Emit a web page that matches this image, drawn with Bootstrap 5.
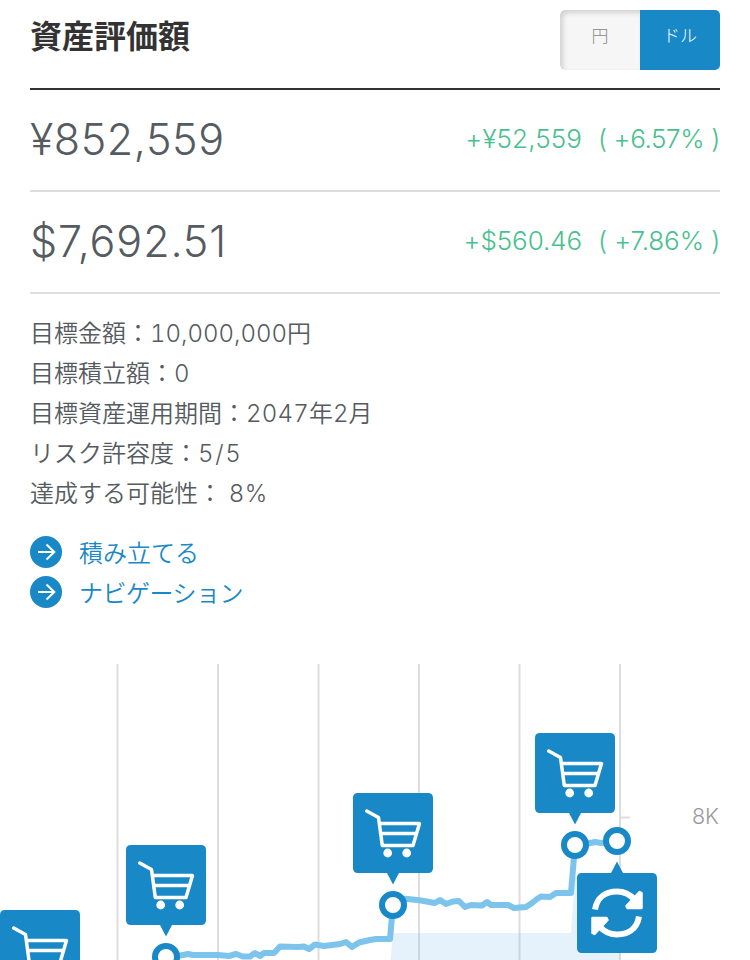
<!DOCTYPE html>
<html lang="ja">
<head>
<meta charset="utf-8">
<meta name="viewport" content="width=device-width, initial-scale=1">
<title>資産評価額</title>
<link href="https://cdn.jsdelivr.net/npm/bootstrap@5.3.0/dist/css/bootstrap.min.css" rel="stylesheet">
<style>
  body { font-family: Inter, "Noto Sans CJK JP", sans-serif; font-weight: 300; color: #555b60; height: 960px; overflow: hidden; }
  .page { height: 960px; overflow: hidden; }
  .pane { padding: 0 30px; }
  .head { height: 90px; padding-top: 10px; border-bottom: 2px solid #333; }
  .head h1 { font-size: 32px; line-height: 54px; font-weight: 700; color: #333; }
  .currency { width: 160px; height: 60px; border-radius: 5px; overflow: hidden; }
  .currency .btn { width: 80px; border: 0; border-radius: 0; padding: 0 0 7px; font-size: 17px; font-weight: 300; line-height: 53px; }
  .currency .off { background: #f6f6f6; color: #888; border-radius: 5px 0 0 5px; box-shadow: inset 3px 3px 5px rgba(0,0,0,.15); }
  .currency .on { background: #1888c6; color: #fff; }
  .sum { height: 102px; border-bottom: 2px solid #ddd; padding-bottom: 2px; }
  .total { font-size: 43px; line-height: 60px; letter-spacing: .6px; }
  .total.usd { letter-spacing: .9px; }
  .gain { font-size: 26px; color: #48c08e; white-space: pre; padding-bottom: 1px; }
  .gain .rate { display: inline-block; width: 122px; margin-left: 16px; }
  .yen { letter-spacing: .1px; }
  .yen .rate { letter-spacing: -.4px; }
  .usd { letter-spacing: -.1px; }
  .facts { padding-top: 20px; font-size: 24px; line-height: 40px; font-weight: 350; }
  .num { font-variant-numeric: tabular-nums; font-weight: 300; }
  .year { letter-spacing: .2px; }
  .risk { letter-spacing: 1.7px; }
  .pct { letter-spacing: .5px; }
  .go { font-size: 24px; line-height: 40px; color: #1888c6; gap: 17px; font-weight: 350; }
  .go:hover { color: #1888c6; }
  .go span { padding-top: 3px; line-height: 37px; }
  .kana { letter-spacing: -.5px; }
  .links { padding-top: 18px; }
  .chart { margin-top: 52px; }
</style>
<script src="https://cdn.jsdelivr.net/npm/bootstrap@5.3.0/dist/js/bootstrap.bundle.min.js"></script>
</head>
<body class="bg-white">
<main class="page">
  <section class="pane">
    <header class="head d-flex justify-content-between align-items-start">
      <h1 class="m-0">資産評価額</h1>
      <div class="currency d-flex">
        <button type="button" class="btn off">円</button>
        <button type="button" class="btn on">ドル</button>
      </div>
    </header>
    <div class="sum d-flex justify-content-between align-items-center">
      <span class="total">¥852,559</span><span class="gain yen">+¥52,559<span class="rate">( +6.57% )</span></span>
    </div>
    <div class="sum d-flex justify-content-between align-items-center">
      <span class="total usd">$7,692.51</span><span class="gain usd">+$560.46<span class="rate">( +7.86% )</span></span>
    </div>
    <ul class="facts list-unstyled m-0">
      <li>目標金額：<span class="num">10,000,000</span>円</li>
      <li>目標積立額：<span class="num">0</span></li>
      <li>目標資産運用期間：<span class="num year">2047</span>年<span class="num">2</span>月</li>
      <li>リスク許容度：<span class="num risk">5/5</span></li>
      <li>達成する可能性： <span class="num pct">8%</span></li>
    </ul>
    <nav class="links d-flex flex-column align-items-start">
      <a href="#" class="go d-flex align-items-center text-decoration-none"><svg width="32" height="32"><use href="#arrow"/></svg><span>積み立てる</span></a>
      <a href="#" class="go d-flex align-items-center text-decoration-none"><svg width="32" height="32"><use href="#arrow"/></svg><span class="kana">ナビゲーション</span></a>
    </nav>
  </section>

  <svg class="chart d-block" width="750" height="296" viewBox="0 664 750 296">
    <defs>
      <symbol id="arrow" viewBox="0 0 32 32">
        <circle cx="16" cy="16" r="16" fill="#1888c6"/>
        <path d="M8 16H24M16.500 8.500L24.300 16L16.500 23.500" fill="none" stroke="#fff" stroke-width="2"/>
      </symbol>
      <g id="cart">
        <path d="M5 0H75Q80 0 80 5V75Q80 80 75 80H46L40 91.500L34 80H5Q0 80 0 75V5Q0 0 5 0Z" fill="#1888c6"/>
        <g fill="none" stroke="#fff" stroke-width="3.500" stroke-linejoin="round" stroke-linecap="round">
          <path d="M13.700 18L25.500 24.500L29.300 52.600H60L66.500 30.600H27"/>
          <path d="M28 40.600H63"/>
        </g>
        <circle cx="34.700" cy="60" r="4.400" fill="#fff"/><circle cx="53.700" cy="60" r="4.400" fill="#fff"/>
      </g>
      <circle id="dot" r="11" fill="#fff" stroke="#1888c6" stroke-width="6"/>
    </defs>
    <path d="M117.500 664V960M218 664V960M318.500 664V960M419 664V960M519.500 664V960M620 664V960M620 817.500H630" stroke="#ddd" stroke-width="2" fill="none"/>
    <path d="M390.500 960L393 933H571L575 877H620V960Z" fill="#7cc0ea" fill-opacity=".2"/>
    <path d="M166 957L180 955.500L188 954L193 955L218 955L229 956L236 954L243 956.500L250 956.500L255 953L260 956L264 953L274 953L280 946.500L298 947L304 946.500L309 949L315 944.500L324 946L340 944L346 942L352 947L359 942.500L370 940L376 939L390 939L393 905L393 898L408 899L421 900.500L435 903L440 900L446 904L453 901.500L459 901L465 907L471 905L482 905.500L487 902L491 905L508 905L514 908L526 907L532 903L537 899L541 896.500L550 897L556 893L571 893L575 845L586 844L595 842L601 843L617 841" stroke="#7cc4ec" stroke-width="6" fill="none" stroke-linejoin="round"/>
    <use href="#dot" x="166" y="957"/><use href="#dot" x="393" y="905"/><use href="#dot" x="575" y="845"/><use href="#dot" x="617" y="841"/>
    <use href="#cart" x="0" y="910"/><use href="#cart" x="126" y="845"/><use href="#cart" x="353" y="793"/><use href="#cart" x="535" y="733"/>
    <g transform="translate(577 873)">
      <path d="M5 0H34L40 -11.500L46 0H75Q80 0 80 5V75Q80 80 75 80H5Q0 80 0 75V5Q0 0 5 0Z" fill="#1888c6"/>
      <g id="half">
        <path d="M18 36.500C20 24 29 18.500 40 18.500C47 18.500 53 21.500 57.500 26.500" fill="none" stroke="#fff" stroke-width="6"/>
        <path d="M64.500 20V35H50.500L49.500 33L62.500 19Z" fill="#fff" stroke="#fff" stroke-width="2.500" stroke-linejoin="round"/>
      </g>
      <use href="#half" transform="rotate(180 40 40)"/>
    </g>
    <text x="719" y="824" text-anchor="end" font-size="21.500" fill="#999">8K</text>
  </svg>
</main>
</body>
</html>
